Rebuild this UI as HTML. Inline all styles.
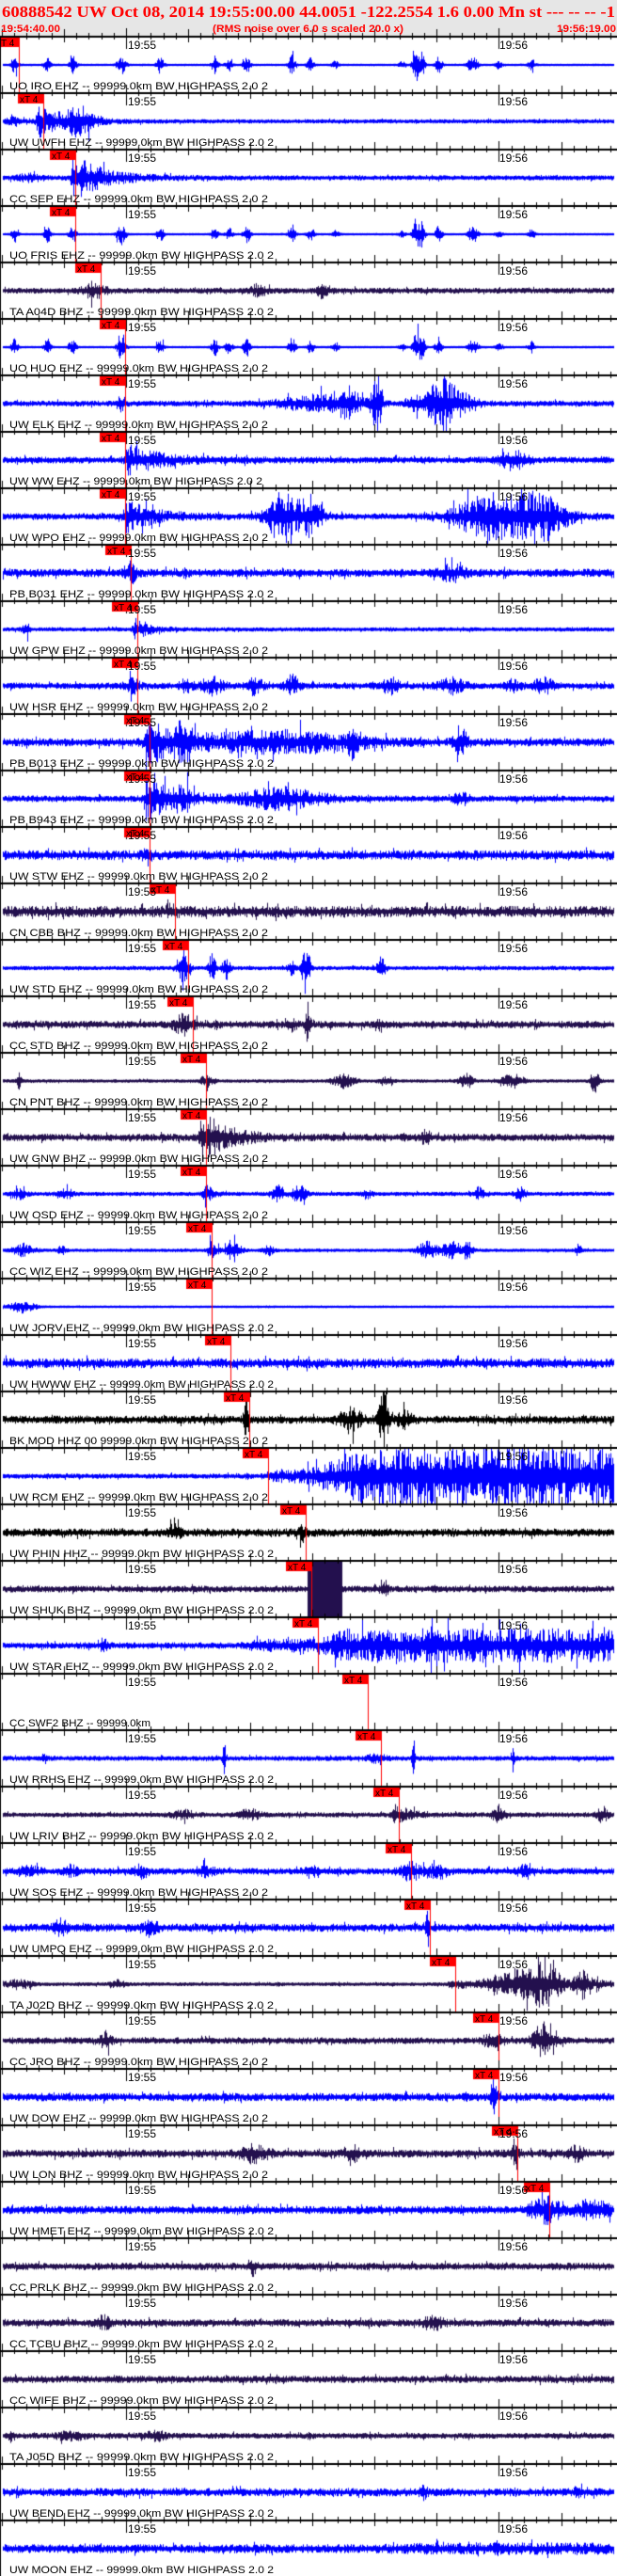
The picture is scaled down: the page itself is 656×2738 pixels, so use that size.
<!DOCTYPE html>
<html><head><meta charset="utf-8"><style>
html,body{margin:0;padding:0;background:#fff;}
#wrap{position:relative;width:656px;height:2738px;overflow:hidden;background:#fff;}
canvas,svg{position:absolute;left:0;top:0;}
</style></head><body><div id="wrap">
<canvas id="c" width="656" height="2738"></canvas>
<svg id="s" width="656" height="2738" xmlns="http://www.w3.org/2000/svg">
<text x="2" y="18" font-family="Liberation Serif, serif" font-weight="bold" font-size="17" fill="#f00" textLength="652" lengthAdjust="spacingAndGlyphs">60888542 UW Oct 08, 2014 19:55:00.00   44.0051 -122.2554  1.6 0.00 Mn st --- -- --  -1</text>
<text x="1" y="34" font-family="Liberation Sans, sans-serif" font-weight="bold" font-size="11" fill="#f00" textLength="63" lengthAdjust="spacingAndGlyphs">19:54:40.00</text>
<text x="226" y="34" font-family="Liberation Sans, sans-serif" font-weight="bold" font-size="11" fill="#f00" textLength="203" lengthAdjust="spacingAndGlyphs">(RMS noise over 6.0 s scaled 20.0 x)</text>
<text x="592" y="34" font-family="Liberation Sans, sans-serif" font-weight="bold" font-size="11" fill="#f00" textLength="63" lengthAdjust="spacingAndGlyphs">19:56:19.00</text>
<g id="lab" font-family="Liberation Sans, sans-serif" font-size="11" fill="#000"></g>
</svg>
</div>
<script>
const B='#0000ff',P='#23104e',K='#000000';
const burst=[[15,9],[50,9],[77,9],[127,9],[131,6],[170,9],[228,9],[243,7],[262,10],[310,11],[330,7],[356,4],[427,3],[442,18],[448,12],[466,9],[500,7],[505,6],[530,4],[565,6]].map(e=>['g',e[0],e[1],2.5]);
const T=[
['UO IRO EHZ',B,20,0.3,burst],
['UW UWFH EHZ',B,46,1.5,[['g',15,4,6],['d',40,17,30],['g',85,12,10]]],
['CC SEP EHZ',B,80,2,[['d',77,25,30],['g',30,3,10]]],
['UO FRIS EHZ',B,80,0.3,burst],
['TA A04D BHZ',P,107,2.5,[['g',100,8,8],['g',275,6,6],['g',343,7,5]]],
['UO HUO EHZ',B,133,0.3,burst],
['UW ELK EHZ',B,133,2.5,[['g',128,10,3],['g',340,8,30],['g',370,13,8],['g',400,28,4],['g',440,8,6],['g',470,26,12],['g',495,6,10]]],
['UW WW EHZ',B,133,3,[['d',135,15,35],['g',545,9,10]]],
['UW WPO EHZ',B,133,3,[['d',133,16,30],['g',300,27,12],['g',330,20,8],['g',520,22,25],['g',575,22,20]]],
['PB B031 EHZ',B,139,4,[['g',139,10,5],['g',480,7,10]]],
['UW GPW EHZ',B,146,1.5,[['g',28,6,3],['d',143,11,15]]],
['UW HSR EHZ',B,146,3,[['g',140,7,5],['g',198,6,5],['g',225,8,8],['g',270,9,6],['g',310,10,5],['g',415,8,6],['g',480,7,10],['g',545,5,6],['g',578,8,8]]],
['PB B013 EHZ',B,159,4,[['d',155,25,30],['g',195,14,6],['g',300,10,60],['g',375,12,5],['g',490,12,5]]],
['PB B943 EHZ',B,159,3,[['d',155,22,30],['g',195,10,6],['g',300,10,30],['g',490,6,5]]],
['UW STW EHZ',B,159,5,[['g',157,10,3]]],
['CN CBB BHZ',P,186,6,[['g',182,6,4]]],
['UW STD EHZ',B,200,1.5,[['g',195,16,4],['g',225,14,3],['g',240,12,3],['g',310,8,3],['g',325,28,3],['g',405,12,3]]],
['CC STD BHZ',P,205,3.5,[['g',195,9,8],['g',310,5,4],['g',327,24,2],['g',405,5,3]]],
['CN PNT BHZ',P,219,1,[['g',20,8,2],['g',220,6,5],['g',365,7,8],['g',410,5,5],['g',495,8,5],['g',545,7,8],['g',632,12,3]]],
['UW GNW BHZ',P,219,3.5,[['d',214,28,25],['g',452,6,4]]],
['UW OSD EHZ',B,219,1.5,[['g',20,5,6],['g',70,5,5],['d',217,15,6],['g',295,8,4],['g',318,10,5],['g',390,4,4],['g',508,6,4],['g',553,6,4]]],
['CC WIZ EHZ',B,225,1,[['g',25,6,8],['g',65,4,3],['d',223,17,5],['g',248,14,5],['g',285,5,4],['g',455,9,8],['g',480,12,6],['g',497,8,4],['g',615,7,2]]],
['UW JORV EHZ',B,225,0.4,[['g',22,6,10]]],
['UW HWWW EHZ',B,245,5,[]],
['BK MOD HHZ 00',K,265,4,[['g',262,24,2],['g',372,12,8],['g',407,30,4],['g',430,7,6]]],
['UW RCM EHZ',B,285,2,[['r',275,5,20],['r',320,26,80]]],
['UW PHIN HHZ',K,325,4,[['g',185,6,5],['g',321,8,3]]],
['UW SHUK BHZ',P,331,3,[['b',327,363,30],['g',408,9,3]]],
['UW STAR EHZ',B,338,3,[['g',110,6,3],['r',255,4,20],['r',340,11,20],['g',459,30,1]]],
['CC SWF2 BHZ',B,391,-1,[]],
['UW RRHS EHZ',B,405,2,[['g',47,4,2],['g',238,20,1],['g',400,6,6],['g',439,30,1],['g',545,14,1]]],
['UW LRIV BHZ',P,424,2,[['g',195,4,8],['g',265,5,8],['d',418,12,15],['g',530,9,5],['g',640,8,4]]],
['UW SOS EHZ',B,437,3,[['g',30,4,8],['g',75,5,5],['g',150,6,5],['g',218,6,6],['g',330,5,5],['g',437,8,8],['g',464,7,8],['g',560,7,5]]],
['UW UMPQ EHZ',B,457,4,[['g',65,8,5],['g',160,8,5],['g',454,30,1]]],
['TA J02D BHZ',P,484,1.2,[['g',20,4,10],['g',125,4,5],['r',470,3,10],['g',545,12,15],['g',578,20,12],['g',620,12,6]]],
['CC JRO BHZ',P,530,3,[['g',112,8,4],['g',525,10,6],['g',578,18,8]]],
['UW DOW EHZ',B,530,4,[['g',525,30,2]]],
['UW LON BHZ',P,550,4,[['g',270,8,10],['g',375,7,5],['g',548,10,3],['g',612,6,6]]],
['UW HMET EHZ',B,584,4,[['r',560,3,15],['g',578,10,10],['g',630,8,8]]],
['CC PRLK BHZ',P,0,3.5,[['g',268,8,3]]],
['CC TCBU BHZ',P,0,3.5,[['g',110,6,5],['g',460,5,8]]],
['CC WIFE BHZ',P,0,3.5,[]],
['TA J05D BHZ',P,0,2.5,[['g',12,6,2],['g',75,4,10],['g',165,4,8]]],
['UW BEND EHZ',B,0,4,[['g',450,5,3],['g',615,6,3]]],
['UW MOON EHZ',B,0,4.5,[['r',380,2,100]]]
];
const cv=document.getElementById('c'),ctx=cv.getContext('2d');
ctx.fillStyle='#e6e6e6';ctx.fillRect(0,0,656,38);
const lab=document.getElementById('lab');
const NS='http://www.w3.org/2000/svg';
function txt(x,y,s,fill,sz,tl){const t=document.createElementNS(NS,'text');t.setAttribute('x',x);t.setAttribute('y',y);if(fill)t.setAttribute('fill',fill);if(sz)t.setAttribute('font-size',sz);if(tl){t.setAttribute('textLength',tl);t.setAttribute('lengthAdjust','spacingAndGlyphs');}t.textContent=s;lab.appendChild(t);}
let seed=12345;function rnd(){seed=(seed*1103515245+12345)&0x7fffffff;return seed/0x7fffffff;}
function inBlock(tr,x){for(const e of tr[4]){if(e[0]==='b'&&x>=e[1]&&x<=e[2])return true;}return false;}
function env(tr,x){let a=tr[3]*0.85;for(const e of tr[4]){const [ty]=e;
 if(ty==='g'){const d=(x-e[1])/e[3];a+=e[2]*Math.exp(-d*d/2);}
 else if(ty==='d'){if(x>=e[1])a+=e[2]*Math.exp(-(x-e[1])/e[3]);else a+=e[2]*Math.exp(-(e[1]-x)/1.5);}
 else if(ty==='r'){if(x>=e[1])a+=e[2]*Math.min(1,(x-e[1])/e[3]);}
 else if(ty==='b'){if(x>=e[1]&&x<=e[2])a+=e[3];}}
 return a;}
T.forEach((tr,k)=>{
 const ay=38+60*k, c=ay+31, top=ay+2, bot=ay+60;
 ctx.fillStyle=tr[1];
 if(tr[3]>=0){
 for(let x=3;x<653;x++){
  let a=env(tr,x);
  let u=rnd(),v=rnd();
  let r1=0.18+0.82*Math.pow(u,1.5), r2=0.18+0.82*Math.pow(v,1.5);
  if(rnd()<0.05){r1*=1.8;} if(rnd()<0.05){r2*=1.8;}
  if(inBlock(tr,x)){r1=1.2;r2=1.2;}
  let y1=Math.max(top,c-a*r1-1), y2=Math.min(bot,c+a*r2+1);
  ctx.fillRect(x,y1,1,y2-y1);
 }}
 ctx.fillStyle='#000';ctx.fillRect(0,ay,656,2);
 for(let t=0;t<=99;t+=2){const x=Math.round(1.8+t*6.608);
  if(t%60==20){ctx.fillRect(x,ay-8,1,22);}
  else if(t%10==0){ctx.fillRect(x,ay-7,1,14);}
  else ctx.fillRect(x,ay-3,1,7);}
 if(tr[2]){const px=tr[2];ctx.fillStyle='#f00';
  ctx.fillRect(Math.max(0,px-27),ay+2,Math.min(27,px),10);
  ctx.fillRect(px,ay+2,1,58);
 }
 txt(136,ay+14,'19:55',null,12);
 txt(531,ay+14,'19:56',null,12);
 if(tr[2]){ if(k==0) txt(1,ay+11,'T 4',null,10); else txt(tr[2]-25,ay+11,'xT 4',null,10);}
 let s;
 if(tr[0]==='CC SWF2 BHZ') s='CC SWF2 BHZ -- 99999.0km';
 else if(tr[0]==='BK MOD HHZ 00') s='BK MOD HHZ 00 99999.0km BW  HIGHPASS  2.0  2';
 else s=tr[0]+' -- 99999.0km BW  HIGHPASS  2.0  2';
 const tl=Math.round(s.length*6.25);
 txt(10,ay+57,s,null,11,tl);
});
ctx.fillStyle='#000';ctx.fillRect(0,38,1,2700);
</script>
</body></html>
